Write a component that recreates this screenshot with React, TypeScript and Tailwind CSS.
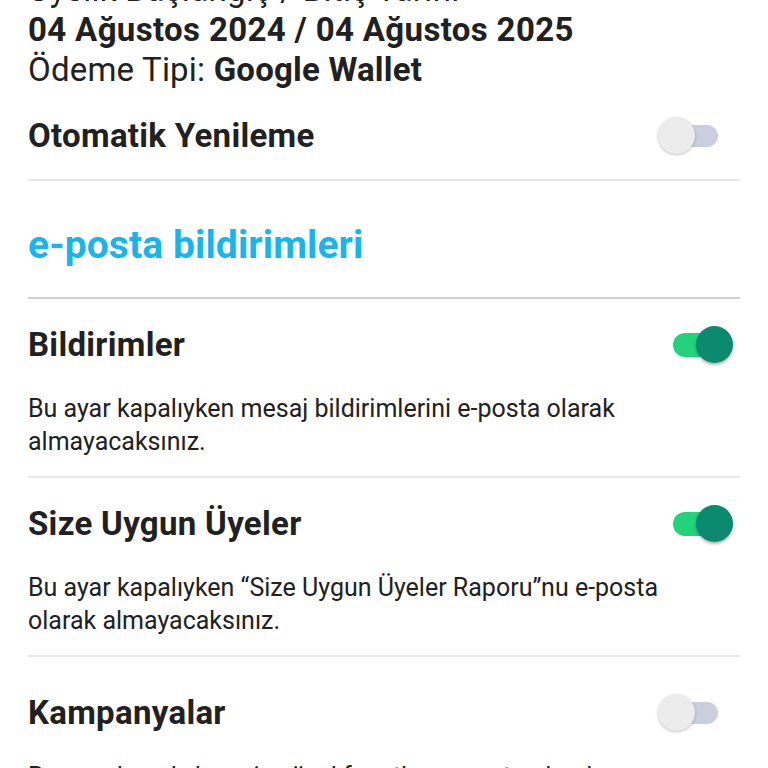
import React from "react";

function Toggle({ on }: { on: boolean }) {
  if (on) {
    return (
      <div className="relative w-[60px] h-[40px] mr-[7px]">
        <div className="absolute left-0 top-[8px] w-[50px] h-[24px] rounded-full bg-[#22d37c]" />
        <div className="absolute right-0 top-[1px] w-[37px] h-[37px] rounded-full bg-[#0b8a6f] shadow-[0_2px_3px_rgba(0,0,0,0.3)]" />
      </div>
    );
  }
  return (
    <div className="relative w-[60px] h-[40px] mr-[22px]">
      <div className="absolute right-0 top-[9px] w-[46px] h-[22px] rounded-full bg-[#c9cfdd]" />
      <div className="absolute left-0 top-[1px] w-[37px] h-[37px] rounded-full bg-[#ececec] shadow-[0_1px_3px_rgba(0,0,0,0.25)]" />
    </div>
  );
}

function Item({ title, desc, on, top = 18 }: { title: string; desc: React.ReactNode; on: boolean; top?: number }) {
  return (
    <div className={`${top === 18 ? "pt-[18px]" : "pt-[28px]"} pb-[18px] border-b-2 border-[#e8e8e8]`}>
      <div className="h-[56px] flex items-center justify-between">
        <span className="text-[33px] font-bold tracking-[0.3px]">{title}</span>
        <Toggle on={on} />
      </div>
      <p className="mt-[19px] text-[25px] leading-[33px] pr-[40px]">{desc}</p>
    </div>
  );
}

export default function App() {
  return (
    <div className="w-[768px] h-[768px] overflow-hidden bg-white text-[#212121] [font-family:Roboto,'Liberation_Sans',sans-serif]">
      <div className="px-[28px] -mt-[30px]">
        <div className="text-[33px] leading-[40px] tracking-[0.3px]">Üyelik Başlangıç / Bitiş Tarihi</div>
        <div className="text-[33px] leading-[40px] font-bold tracking-[0.35px]">04 Ağustos 2024 / 04 Ağustos 2025</div>
        <div className="text-[33px] leading-[40px] tracking-[0.2px]">
          Ödeme Tipi: <span className="font-bold">Google Wallet</span>
        </div>
        <div className="pt-[18px] pb-[15px] border-b-2 border-[#e8e8e8]">
          <div className="h-[56px] flex items-center justify-between">
            <span className="text-[33px] font-bold tracking-[0.3px]">Otomatik Yenileme</span>
            <Toggle on={false} />
          </div>
        </div>
        <div className="h-[118px] flex items-center border-b-2 border-[#cfcfcf]">
          <h2 className="text-[39px] font-bold tracking-[0.1px] text-[#17b5ec] mt-[13px]">e-posta bildirimleri</h2>
        </div>
        <Item title="Bildirimler" on={true} desc="Bu ayar kapalıyken mesaj bildirimlerini e-posta olarak almayacaksınız." />
        <Item
          title="Size Uygun Üyeler"
          on={true}
          desc={<>Bu ayar kapalıyken “Size Uygun Üyeler Raporu”nu <span className="whitespace-nowrap">e-posta</span> olarak almayacaksınız.</>}
        />
        <Item title="Kampanyalar" on={false} top={28} desc="Bu ayar kapalıyken size özel fırsatları e-posta olarak almayacaksınız." />
      </div>
    </div>
  );
}
